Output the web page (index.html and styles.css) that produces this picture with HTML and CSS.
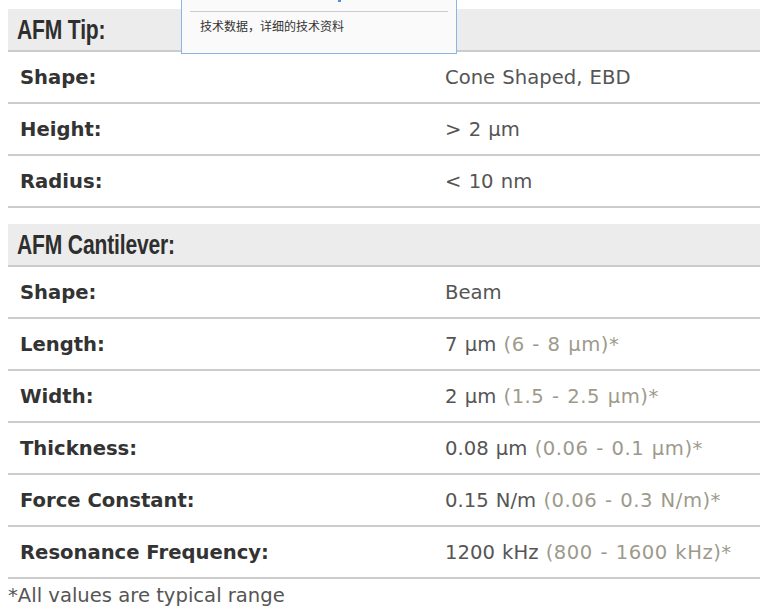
FILE: index.html
```html
<!DOCTYPE html>
<html>
<head>
<meta charset="utf-8">
<link rel="stylesheet" href="styles.css">
</head>
<body>
<div class="page">
  <section class="spec">
    <h2 class="spec-head"><span class="spec-title">AFM Tip:</span></h2>
    <div class="row"><div class="label">Shape:</div><div class="value">Cone Shaped, EBD</div></div>
    <div class="row"><div class="label">Height:</div><div class="value">&gt; 2 µm</div></div>
    <div class="row"><div class="label">Radius:</div><div class="value">&lt; 10 nm</div></div>
  </section>
  <section class="spec spec-second">
    <h2 class="spec-head"><span class="spec-title">AFM Cantilever:</span></h2>
    <div class="row"><div class="label">Shape:</div><div class="value">Beam</div></div>
    <div class="row"><div class="label">Length:</div><div class="value">7 µm <span class="range">(6 - 8 µm)*</span></div></div>
    <div class="row"><div class="label">Width:</div><div class="value">2 µm <span class="range">(1.5 - 2.5 µm)*</span></div></div>
    <div class="row"><div class="label">Thickness:</div><div class="value">0.08 µm <span class="range">(0.06 - 0.1 µm)*</span></div></div>
    <div class="row"><div class="label">Force Constant:</div><div class="value">0.15 N/m <span class="range">(0.06 - 0.3 N/m)*</span></div></div>
    <div class="row"><div class="label">Resonance Frequency:</div><div class="value">1200 kHz <span class="range">(800 - 1600 kHz)*</span></div></div>
  </section>
  <p class="note">*All values are typical range</p>
</div>
<div class="popup">
  <span class="popup-mark"></span>
  <div class="popup-rule"></div>
  <div class="popup-text">技术数据，详细的技术资料</div>
</div>
</body>
</html>
```
FILE: styles.css
```css
html, body {
  margin: 0;
  padding: 0;
  background: #fff;
  overflow: hidden;
}
body {
  font-family: "DejaVu Sans", Verdana, sans-serif;
  color: #333;
}
.page {
  padding: 9px 0 0 8px;
  width: 752px;
}
.spec {
  margin: 0;
}
.spec-second {
  margin-top: 16px;
}
.spec-head {
  margin: 0;
  height: 43px;
  box-sizing: border-box;
  background: #ececec;
  border-bottom: 2px solid #cccccc;
  padding: 4px 0 0 9px;
  font-family: "Liberation Sans", Arial, sans-serif;
  font-weight: bold;
  font-size: 27px;
  line-height: 34px;
  color: #2e2e2e;
}
.spec-title {
  display: inline-block;
  transform: scaleX(0.78);
  transform-origin: left center;
  letter-spacing: -0.2px;
}
.row {
  display: grid;
  grid-template-columns: 437px 1fr;
  height: 52px;
  box-sizing: border-box;
  border-bottom: 2px solid #cccccc;
  align-items: center;
}
.label {
  padding-left: 12px;
  font-weight: bold;
  font-size: 19.6px;
  color: #333;
}
.value {
  font-size: 19.6px;
  color: #555;
  word-spacing: 1px;
}
.range {
  color: #9d9a8c;
  letter-spacing: 0.5px;
}
.note {
  margin: 5px 0 0 0;
  font-size: 19.6px;
  color: #555;
  line-height: 24px;
}
.popup {
  position: absolute;
  left: 181px;
  top: -10px;
  width: 274px;
  height: 62px;
  background: #fafafa;
  border: 1px solid #8db4e4;
}
.popup-mark {
  position: absolute;
  left: 156px;
  top: 8px;
  width: 3px;
  height: 3px;
  background: #4a90e2;
}
.popup-rule {
  position: absolute;
  left: 8px;
  right: 8px;
  top: 20px;
  height: 1px;
  background: #cccccc;
}
.popup-text {
  position: absolute;
  left: 18px;
  top: 27px;
  font-family: "Noto Sans CJK SC", "Microsoft YaHei", sans-serif;
  font-size: 12px;
  line-height: 16px;
  color: #333;
}
```
